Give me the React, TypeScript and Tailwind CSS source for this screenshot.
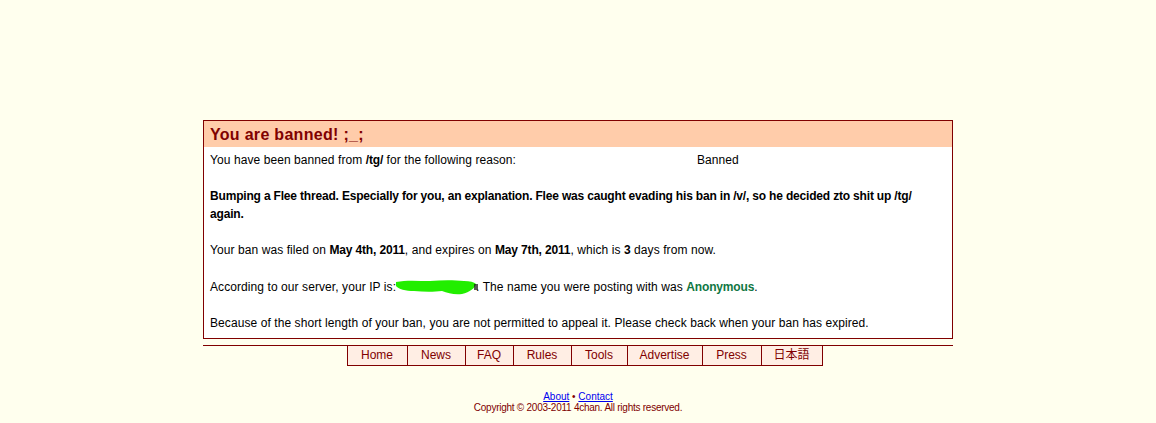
import React from 'react'

const navItems = [
  { label: 'Home', w: 'w-[59px]' },
  { label: 'News', w: 'w-[58px]' },
  { label: 'FAQ', w: 'w-[48px]' },
  { label: 'Rules', w: 'w-[58px]' },
  { label: 'Tools', w: 'w-[56px]' },
  { label: 'Advertise', w: 'w-[75px]' },
  { label: 'Press', w: 'w-[59px]' },
  { label: '日本語', w: 'w-[61px]' },
]

const Scribble = () => (
  <svg width="86" height="16" viewBox="0 0 86 16" className="inline-block align-[-4px] -ml-[2px] -mr-[4px]">
    <path
      d="M2 3 C12 1 24 2 36 2 C48 1 60 1 70 2 C76 2 80 3 82 5 C81 9 76 13 68 15 C60 16 54 14 48 12 C40 13 30 13 20 12 C12 12 4 10 2 7 Z"
      fill="#22ee00"
    />
    <rect x="80" y="5" width="4" height="6" fill="#111" opacity="0.7" />
  </svg>
)

export default function App() {
  return (
    <div className="min-h-[423px] bg-[#ffffee] pt-[120px] font-['Liberation_Sans',Arial,sans-serif]">
      <div className="mx-auto w-[750px] border border-[#800000] bg-white">
        <div className="h-[26px] bg-[#ffccaa] pl-[6px] text-[16px] font-bold leading-[27px] tracking-[0.3px] text-[#800000]">
          You are banned! ;_;
        </div>
        <div className="pl-[6px] pr-[6px] pt-[4px] pb-[6px] text-[12px] leading-[18px] tracking-[0.08px] text-black">
          <div className="flex">
            <span className="w-[487px] shrink-0">
              You have been banned from <b className="tracking-[-0.15px]">/tg/</b> for the following reason:
            </span>
            <span>Banned</span>
          </div>
          <div className="h-[18px]" />
          <p className="font-bold tracking-[-0.18px]">
            Bumping a Flee thread. Especially for you, an explanation. Flee was caught evading his ban in /v/, so he decided zto shit up /tg/ again.
          </p>
          <div className="h-[18px]" />
          <p>
            Your ban was filed on <b className="tracking-[-0.15px]">May 4th, 2011</b>, and expires on{' '}
            <b className="tracking-[-0.15px]">May 7th, 2011</b>, which is <b>3</b> days from now.
          </p>
          <div className="h-[19px]" />
          <p>
            According to our server, your IP is:<Scribble />. The name you were posting with was{' '}
            <b className="tracking-[-0.15px] text-[#117743]">Anonymous</b>.
          </p>
          <div className="h-[18px]" />
          <p>
            Because of the short length of your ban, you are not permitted to appeal it. Please check back when your ban has expired.
          </p>
        </div>
      </div>

      <div className="mx-auto mt-[6px] w-[750px] border-t border-[#800000]">
        <div className="flex justify-center pl-[13px]">
          <div className="flex border-x border-b border-[#800000] bg-[#ffeee4]">
            {navItems.map((item, i) => (
              <a
                key={item.label}
                href="#"
                className={`${item.w} ${i > 0 ? 'border-l border-[#800000]' : ''} h-[19px] text-center text-[12px] leading-[19px] text-[#800000] font-['Liberation_Sans','Noto_Sans_CJK_JP',sans-serif]`}
              >
                {item.label}
              </a>
            ))}
          </div>
        </div>
      </div>

      <div className="mt-[25px] text-center text-[10px] leading-[11px]">
        <div>
          <a href="#" className="text-[#0000ee] underline">About</a>
          <span className="text-[#800000]"> &bull; </span>
          <a href="#" className="text-[#0000ee] underline">Contact</a>
        </div>
        <div className="tracking-[-0.25px] text-[#800000]">Copyright © 2003-2011 4chan. All rights reserved.</div>
      </div>
    </div>
  )
}
